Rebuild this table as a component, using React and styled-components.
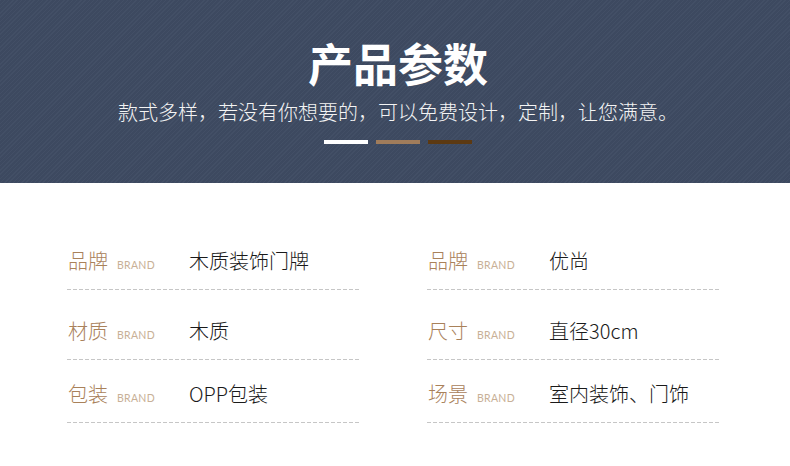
import styled, { createGlobalStyle } from 'styled-components';

const GlobalStyle = createGlobalStyle`
  body {
    margin: 0;
    background: #ffffff;
    font-family: "Noto Sans CJK SC", "Noto Sans", sans-serif;
  }
`

const Page = styled.div`
  width: 790px;
  height: 466px;
  background: #fff;
  overflow: hidden;
`

const Header = styled.header`
  height: 183px;
  box-sizing: border-box;
  padding: 40px 0 0 6px;
  display: flex;
  flex-direction: column;
  align-items: center;
  background-color: #3e4b62;
  background-image: repeating-linear-gradient(
    135deg,
    rgba(255, 255, 255, 0.025) 0px,
    rgba(255, 255, 255, 0.025) 1px,
    rgba(0, 0, 0, 0.025) 1px,
    rgba(0, 0, 0, 0.025) 3px
  );
`

const Title = styled.h1`
  margin: 0;
  font-size: 45px;
  line-height: 46px;
  font-weight: 700;
  color: #ffffff;
`

const Subtitle = styled.p`
  margin: 16px 0 0;
  font-size: 20px;
  line-height: 20px;
  font-weight: 300;
  color: #f4f4f4;
`

const Bars = styled.div`
  display: flex;
  gap: 8px;
  margin-top: 18px;
`

const Bar = styled.span`
  width: 44px;
  height: 4px;
  background: ${p => p.$color};
`

const Table = styled.section`
  display: grid;
  grid-template-columns: 293px 293px;
  column-gap: 67px;
  padding: 68px 0 0 67px;
`

const Column = styled.div`
  display: flex;
  flex-direction: column;
`

const Row = styled.div`
  display: flex;
  align-items: baseline;
  padding-top: ${p => p.$top}px;
  padding-bottom: 19px;
  background-image: repeating-linear-gradient(
    90deg,
    #c6c6c6 0px,
    #c6c6c6 4px,
    transparent 4px,
    transparent 6px
  );
  background-size: 100% 1px;
  background-repeat: no-repeat;
  background-position: bottom left;
`

const LabelBox = styled.div`
  width: 122px;
  padding-left: 1px;
  box-sizing: border-box;
  display: flex;
  align-items: baseline;
`

const Label = styled.span`
  font-size: 20px;
  line-height: 20px;
  font-weight: 300;
  color: #a9815a;
`

const Brand = styled.span`
  margin-left: 9px;
  font-family: "Lato", "Liberation Sans", sans-serif;
  font-weight: 400;
  font-size: 10.5px;
  letter-spacing: 0.3px;
  color: #c8b096;
`

const Value = styled.span`
  font-size: 20px;
  line-height: 20px;
  font-weight: 300;
  color: #1a1a1a;
`

const left = [
  { label: '品牌', value: '木质装饰门牌', top: 0 },
  { label: '材质', value: '木质', top: 31 },
  { label: '包装', value: 'OPP包装', top: 24 },
]

const right = [
  { label: '品牌', value: '优尚', top: 0 },
  { label: '尺寸', value: '直径30cm', top: 31 },
  { label: '场景', value: '室内装饰、门饰', top: 24 },
]

function Spec({ items }) {
  return (
    <Column>
      {items.map((it, i) => (
        <Row key={i} $top={it.top}>
          <LabelBox>
            <Label>{it.label}</Label>
            <Brand>BRAND</Brand>
          </LabelBox>
          <Value>{it.value}</Value>
        </Row>
      ))}
    </Column>
  )
}

export default function App() {
  return (
    <Page>
      <GlobalStyle />
      <Header>
        <Title>产品参数</Title>
        <Subtitle>款式多样，若没有你想要的，可以免费设计，定制，让您满意。</Subtitle>
        <Bars>
          <Bar $color="#ffffff" />
          <Bar $color="#a07c5b" />
          <Bar $color="#5c3912" />
        </Bars>
      </Header>
      <Table>
        <Spec items={left} />
        <Spec items={right} />
      </Table>
    </Page>
  )
}
